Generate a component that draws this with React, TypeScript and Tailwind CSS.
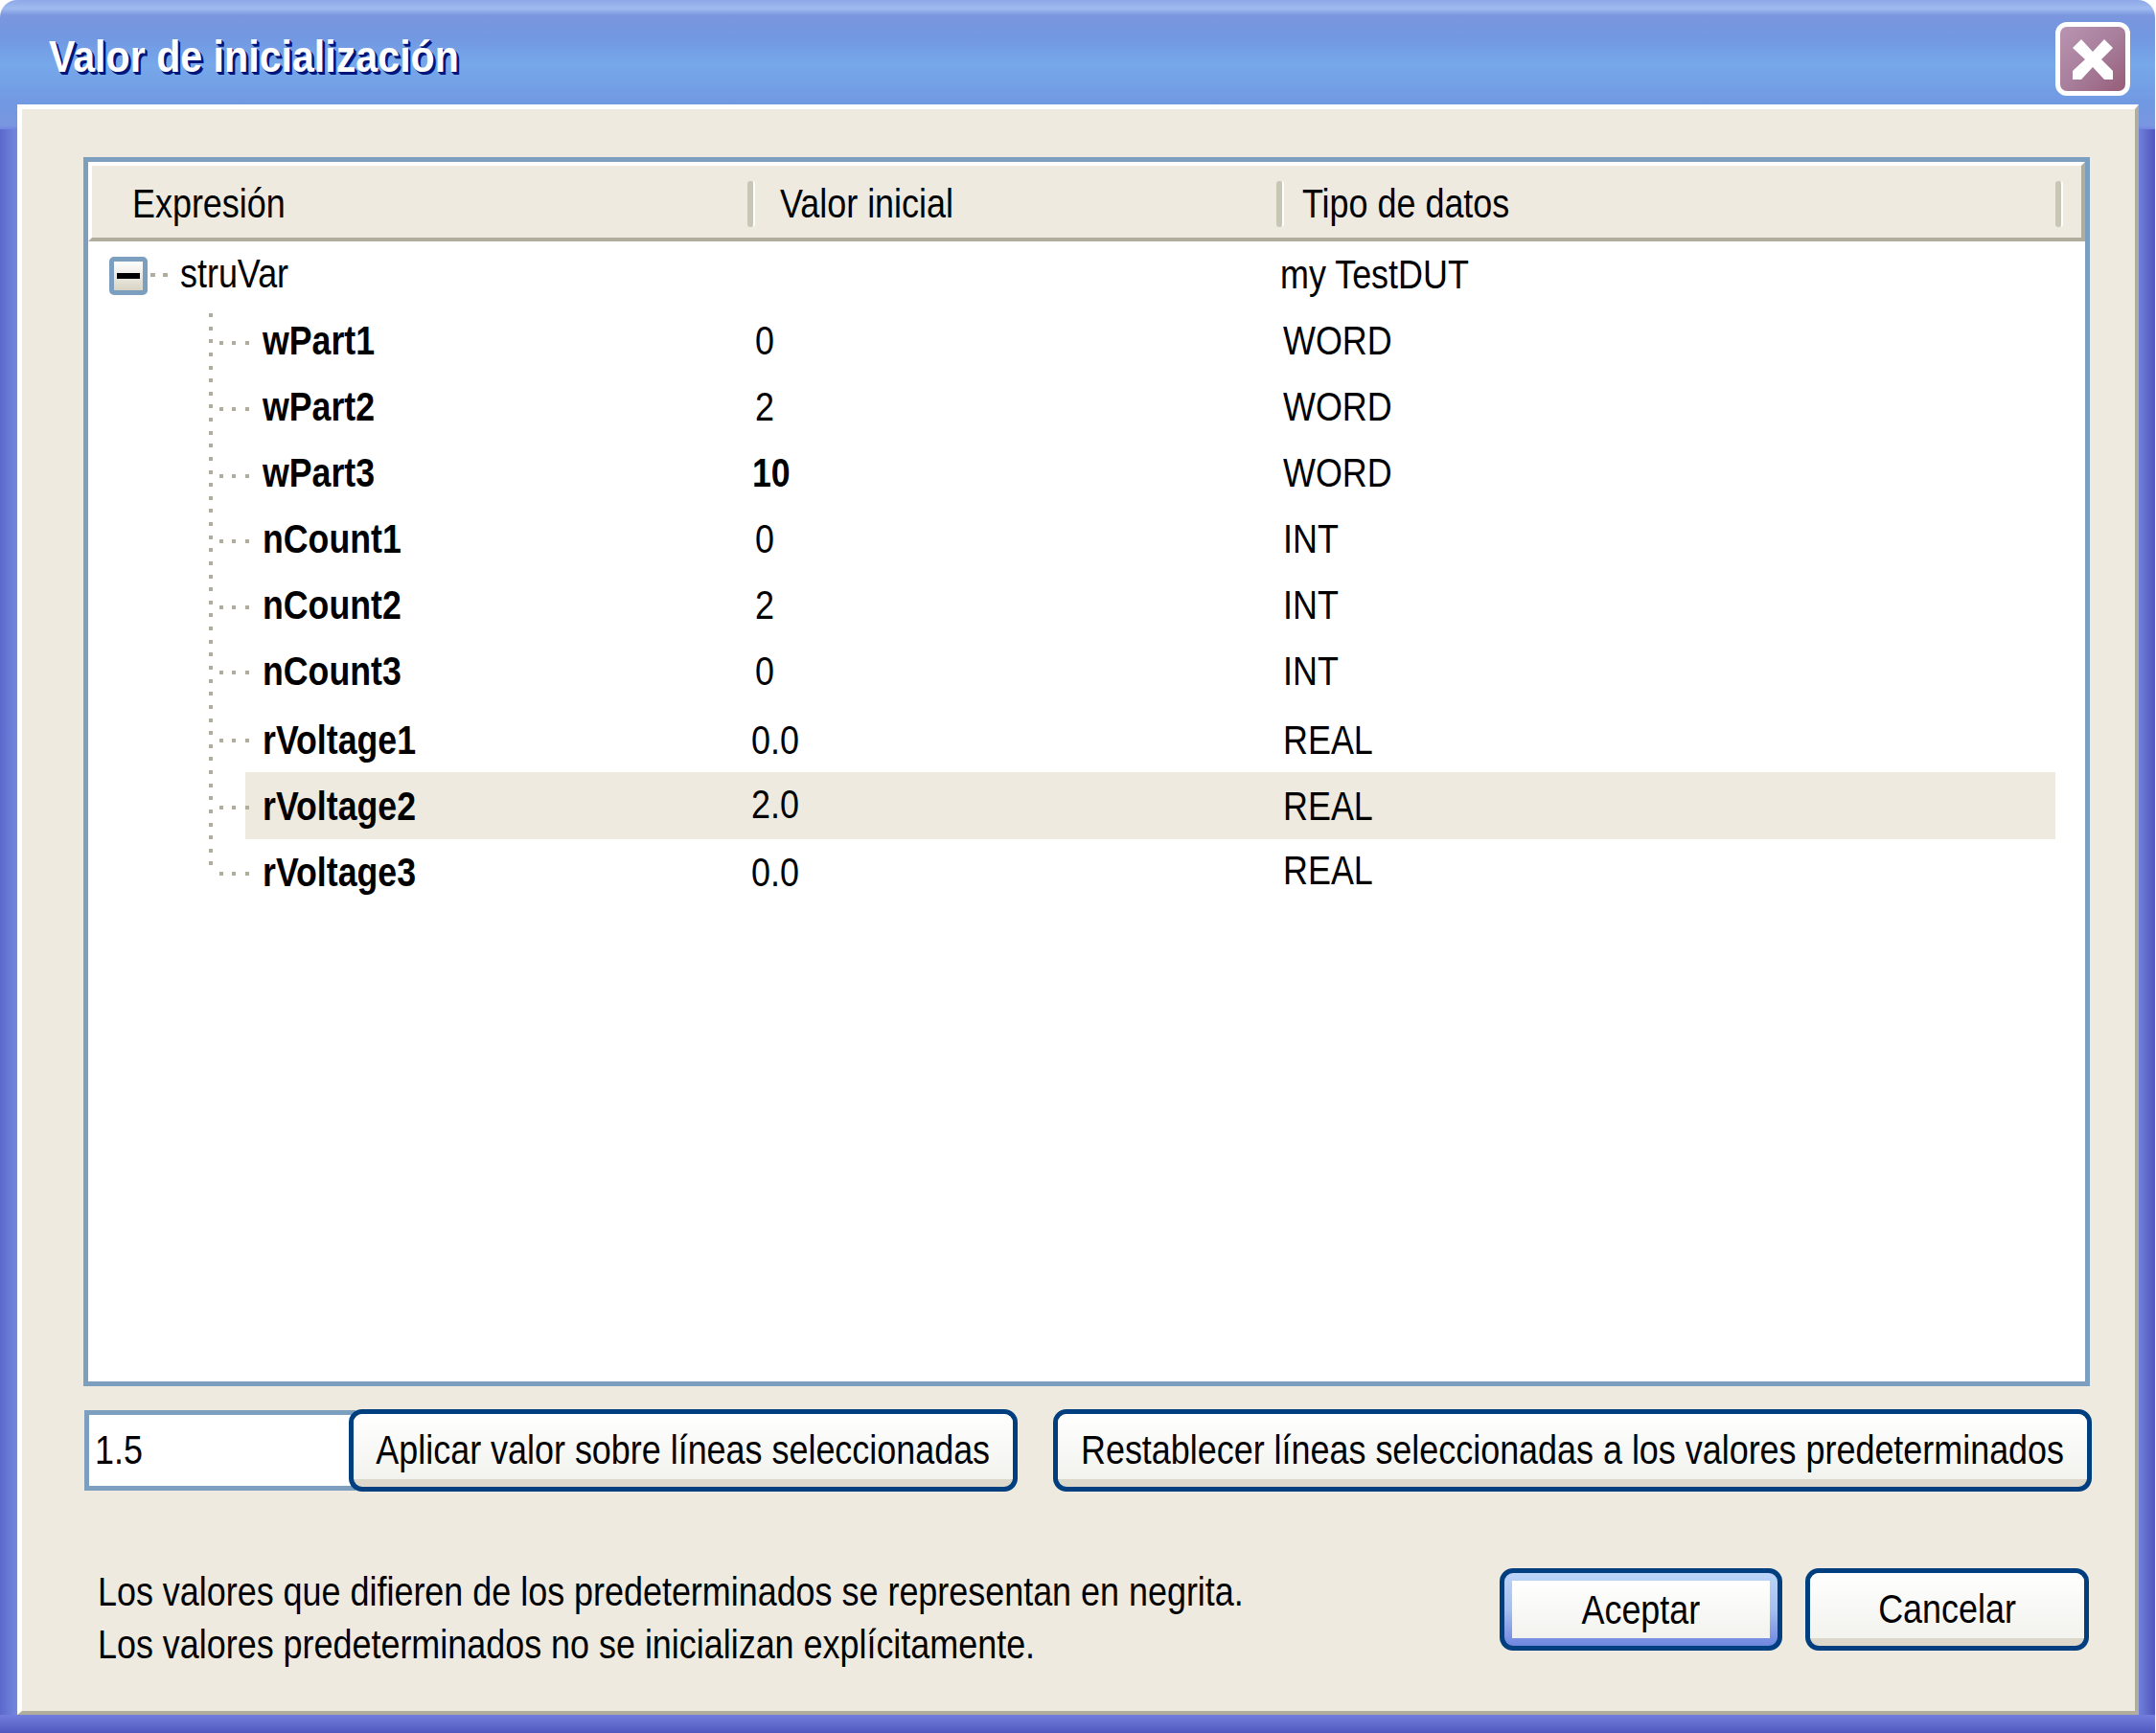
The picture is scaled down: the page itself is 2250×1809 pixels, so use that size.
import React from 'react';

type Row = {
  name: string;
  value: string;
  type: string;
  h: string;
  boldValue?: boolean;
  selected?: boolean;
  rowCls?: string;
  valueCls?: string;
  typeCls?: string;
};

// row heights and nudges follow the picture, its rows are not quite regular
const rows: Row[] = [
  { name: 'wPart1', value: '0', type: 'WORD', h: 'h-[69px]', valueCls: 'ml-[3px]' },
  { name: 'wPart2', value: '2', type: 'WORD', h: 'h-[69px]', valueCls: 'ml-[3px]' },
  { name: 'wPart3', value: '10', type: 'WORD', h: 'h-[69px]', boldValue: true },
  { name: 'nCount1', value: '0', type: 'INT', h: 'h-[69px]', valueCls: 'ml-[3px]' },
  { name: 'nCount2', value: '2', type: 'INT', h: 'h-[69px]', valueCls: 'ml-[3px]' },
  { name: 'nCount3', value: '0', type: 'INT', h: 'h-[69px]', valueCls: 'ml-[3px]' },
  { name: 'rVoltage1', value: '0.0', type: 'REAL', h: 'h-[71px]', rowCls: 'pt-[3px]', valueCls: '-ml-[1px]' },
  { name: 'rVoltage2', value: '2.0', type: 'REAL', h: 'h-[70px]', selected: true, valueCls: '-ml-[1px] -mt-[4px]' },
  { name: 'rVoltage3', value: '0.0', type: 'REAL', h: 'h-[70px]', rowCls: 'pb-[2px]', valueCls: '-ml-[1px]', typeCls: '-mt-[3px]' },
];

// the source picture is squeezed horizontally, so text is narrowed the same way
function Txt({ children, bold }: { children: React.ReactNode; bold?: boolean }) {
  return (
    <span
      className={`inline-block origin-left whitespace-nowrap ${bold ? 'scale-x-[0.85] font-bold' : 'scale-x-[0.855]'}`}
    >
      {children}
    </span>
  );
}

function Sep() {
  return <div className="h-[48px] w-[8px] shrink-0 rounded-[3px] border-r-[2px] border-r-white bg-[#c8c7b5]" />;
}

function Btn({ label, w, focus }: { label: string; w: string; focus?: boolean }) {
  return (
    <button
      className={`flex h-[86px] shrink-0 items-stretch rounded-[14px] border-[5px] border-[#003f7f] ${w} ${
        focus ? 'bg-[linear-gradient(180deg,#bcd4f8,#a4c0f0_50%,#6f86e0)] p-[8px]' : 'bg-[#dcd8cc] pb-[8px]'
      }`}
    >
      <span
        className={`flex min-w-0 flex-1 items-center justify-center bg-[linear-gradient(180deg,#ffffff,#f2f2ee)] ${
          focus ? '' : 'rounded-t-[9px] pt-[6px]'
        }`}
      >
        <span className="inline-block shrink-0 scale-x-[0.855] whitespace-nowrap">{label}</span>
      </span>
    </button>
  );
}

function TreeLines() {
  const vertical = Array.from({ length: 43 }, (_, i) => Math.round(75 + i * 13.63));
  const centers = [104, 173, 243, 311, 380, 448, 519, 589, 658];
  return (
    <svg className="pointer-events-none absolute left-0 top-0" width="200" height="680">
      {vertical.map((y) => (
        <rect key={y} x="126" y={y} width="4" height="4" fill="#b0ad9c" />
      ))}
      {centers.map((y) =>
        [137, 150, 164].map((x) => <rect key={x} x={x} y={y} width="4" height="4" fill="#b0ad9c" />),
      )}
    </svg>
  );
}

export default function App() {
  return (
    <div className="h-[1809px] w-[2250px] bg-white font-['Liberation_Sans',Arial,sans-serif] text-[42px] leading-[55px] text-black">
      <div className="flex h-full w-[2249px] flex-col overflow-hidden rounded-t-[18px]">
        {/* title bar */}
        <div className="flex h-[109px] shrink-0 justify-between bg-[linear-gradient(180deg,#8ea8e8_0px,#a0baf0_9px,#7a96de_16px,#7298e2_40px,#76a8ea_68px,#7198e2_109px)] pl-[51px] pr-[26px]">
          <div className="mt-[32px] text-[46px] font-bold text-white [text-shadow:1px_1px_0_#00167a,2px_2px_0_#00167a,3px_3px_0_#00167a]">
            <span className="inline-block origin-left scale-x-[0.895] whitespace-nowrap">Valor de inicialización</span>
          </div>
          <button className="mt-[23px] flex h-[77px] w-[78px] items-center justify-center rounded-[12px] border-[5px] border-white bg-[linear-gradient(135deg,#b994b0,#a87f9c_50%,#965c78)]">
            <svg width="42" height="42" viewBox="0 0 42 42">
              <polygon
                fill="#fff"
                points="0,9 9,0 21,13 33,0 42,9 30,21 42,33 42,42 33,42 21,29 9,42 0,42 0,33 13,21"
              />
            </svg>
          </button>
        </div>

        <div className="flex flex-1">
          <div className="flex w-[18px] shrink-0 flex-col">
            <div className="h-[26px] bg-[linear-gradient(180deg,#7198e2,#7a96e0_85%,#7084e0)]" />
            <div className="flex-1 bg-[linear-gradient(90deg,#5b68cc,#7488de)]" />
          </div>

          {/* dialog body */}
          <div className="flex-1 border-b-[4px] border-l-[5px] border-r-[4px] border-t-[5px] border-b-[#b0ad9c] border-l-white border-r-[#b0ad9c] border-t-white bg-[#eeeadf] pl-[64px] pt-[50px]">
            <div className="h-[1283px] w-[2094px] border-[5px] border-[#7c9fc0] bg-white">
              <div className="flex h-[83px] w-[2084px] items-center border-b-[4px] border-l-[4px] border-r-[4px] border-t-[4px] border-b-[#b0ad9c] border-l-white border-r-[#b0ad9c] border-t-white bg-[#eeeadf] pt-[4px]">
                <div className="w-[684px] pl-[42px]"><Txt>Expresión</Txt></div>
                <Sep />
                <div className="w-[544px] pl-[26px]"><Txt>Valor inicial</Txt></div>
                <Sep />
                <div className="w-[805px] pl-[19px]"><Txt>Tipo de datos</Txt></div>
                <Sep />
              </div>

              <div className="relative">
                <div className="flex h-[69px] items-center pl-[22px]">
                  <div className="mt-[2px] flex h-[40px] w-[40px] shrink-0 items-center justify-center rounded-[5px] border-[5px] border-[#7c9fc0] bg-[linear-gradient(180deg,#ffffff,#d8d4c4)]">
                    <div className="h-[6px] w-[24px] bg-black" />
                  </div>
                  <div className="flex w-[34px] shrink-0 gap-[8px] pl-[3px]">
                    <div className="h-[4px] w-[5px] bg-[#b0ad9c]" />
                    <div className="h-[4px] w-[5px] bg-[#b0ad9c]" />
                  </div>
                  <div className="-mt-[2px] w-[1148px] shrink-0"><Txt>struVar</Txt></div>
                  <Txt>my TestDUT</Txt>
                </div>

                {rows.map((r) => (
                  <div key={r.name} className={`${r.h} pl-[164px]`}>
                    <div
                      className={`flex h-full w-[1889px] items-center pl-[18px] ${r.rowCls ?? ''} ${
                        r.selected ? 'bg-[#eeeadf]' : ''
                      }`}
                    >
                      <div className="w-[511px] shrink-0"><Txt bold>{r.name}</Txt></div>
                      <div className="w-[554px] shrink-0">
                        <div className={r.valueCls}><Txt bold={r.boldValue}>{r.value}</Txt></div>
                      </div>
                      <div className={r.typeCls}><Txt>{r.type}</Txt></div>
                    </div>
                  </div>
                ))}

                <TreeLines />
              </div>
            </div>

            <div className="mt-[24px] flex items-center pl-[1px]">
              <div className="flex h-[84px] w-[283px] shrink-0 items-center border-[5px] border-[#7c9fc0] bg-white pb-[2px] pl-[6px]">
                <Txt>1.5</Txt>
              </div>
              <div className="-ml-[7px]">
                <Btn label="Aplicar valor sobre líneas seleccionadas" w="w-[698px]" />
              </div>
              <div className="ml-[37px]">
                <Btn label="Restablecer líneas seleccionadas a los valores predeterminados" w="w-[1084px]" />
              </div>
            </div>

            <div className="mt-[80px] flex w-[2093px] justify-between pl-[15px]">
              <div className="-mt-[3px]">
                <div><Txt>Los valores que difieren de los predeterminados se representan en negrita.</Txt></div>
                <div><Txt>Los valores predeterminados no se inicializan explícitamente.</Txt></div>
              </div>
              <div className="flex gap-[24px]">
                <Btn label="Aceptar" w="w-[295px]" focus />
                <Btn label="Cancelar" w="w-[296px]" />
              </div>
            </div>
          </div>

          <div className="flex w-[17px] shrink-0 flex-col">
            <div className="h-[26px] bg-[linear-gradient(180deg,#7198e2,#7a96e0_85%,#7084e0)]" />
            <div className="flex-1 bg-[linear-gradient(90deg,#7080da,#5056bc)]" />
          </div>
        </div>

        <div className="h-[19px] shrink-0 bg-[linear-gradient(180deg,#727edc,#5058be)]" />
      </div>
    </div>
  );
}
